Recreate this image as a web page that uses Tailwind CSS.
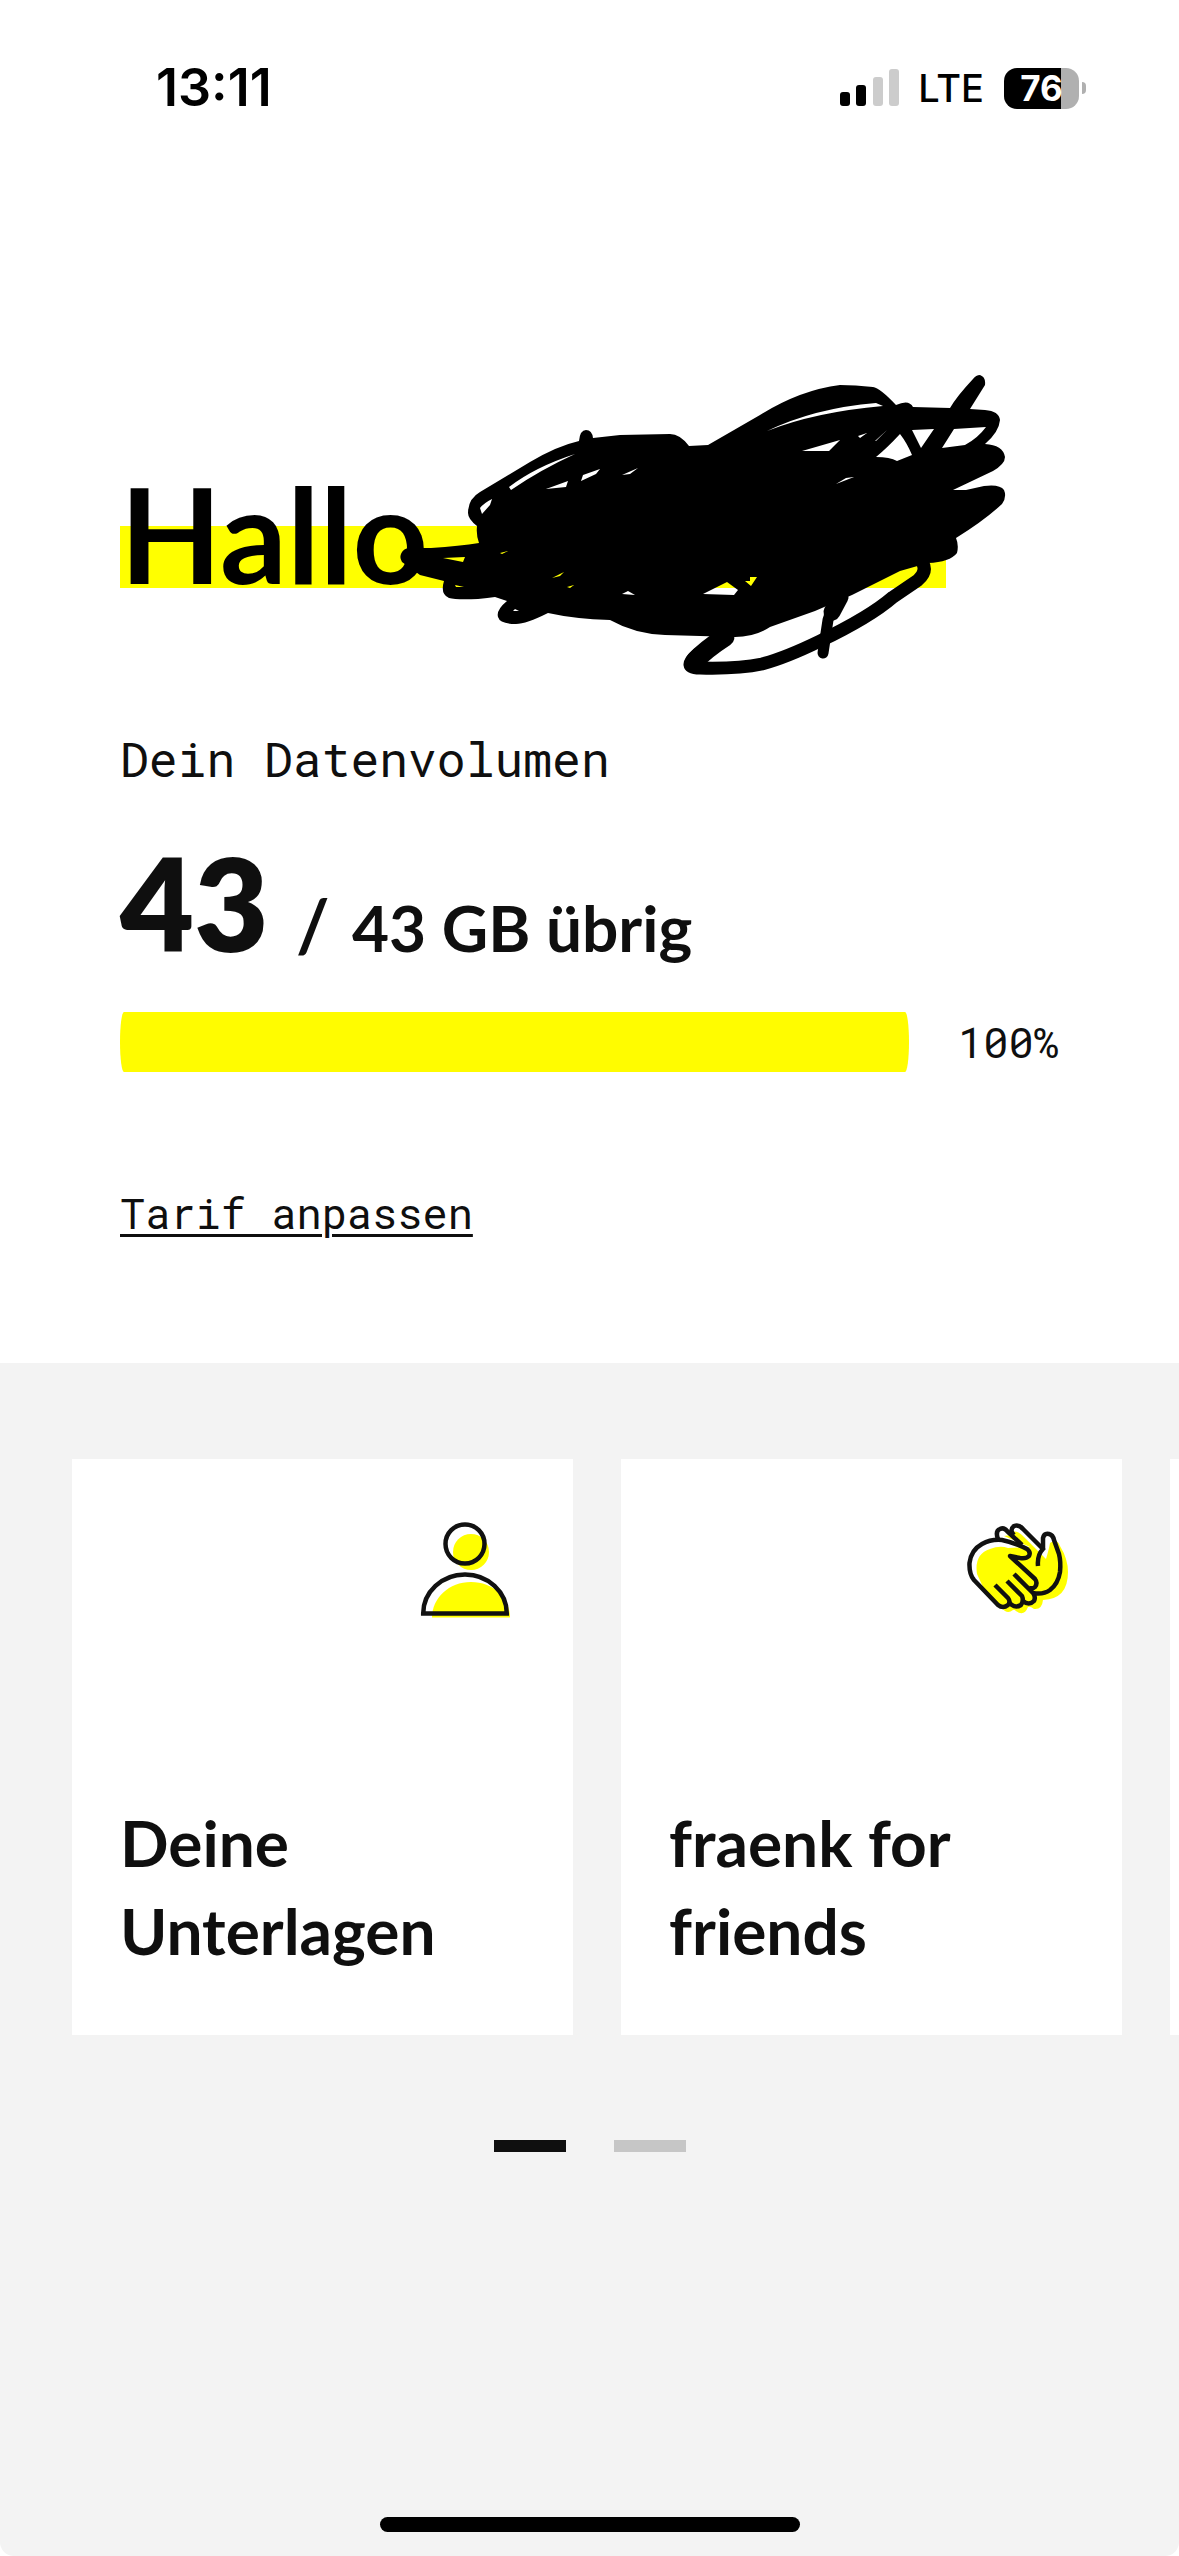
<!DOCTYPE html>
<html lang="de">
<head>
<meta charset="utf-8">
<meta name="viewport" content="width=device-width, initial-scale=1">
<title>fraenk</title>
<script src="https://cdn.jsdelivr.net/npm/@tailwindcss/browser@4"></script>
</head>
<body class="flex min-h-screen flex-col bg-white font-['Lato',sans-serif] text-[#0f0f0f]">

<header class="flex items-end justify-between pl-[156px] pr-[93px] pt-[58px] font-['Inter',sans-serif] text-black">
  <time class="text-[52px] leading-[60px] font-semibold">13:11</time>
  <div class="flex h-[60px] items-center">
    <svg class="h-10 w-[60px]" viewBox="0 0 60 40" role="img" aria-label="Signal">
      <rect x="0" y="24" width="10" height="14" rx="3"/>
      <rect x="16" y="17" width="10" height="21" rx="3"/>
      <rect x="33" y="9" width="10" height="29" rx="3" fill="#ccc"/>
      <rect x="49" y="1" width="10" height="37" rx="3" fill="#ccc"/>
    </svg>
    <span class="ml-[18px] text-[38px] leading-[60px] font-medium">LTE</span>
    <div class="ml-5 flex items-center gap-[3px]">
      <div class="flex h-[41px] w-[75px] items-center justify-center rounded-[13px] bg-[linear-gradient(90deg,#000_76%,#b0b0b0_76%)] text-[35px] font-bold text-white">76</div>
      <div class="h-3 w-1 rounded-r-full bg-[#b0b0b0]"></div>
    </div>
  </div>
</header>

<main class="flex flex-1 flex-col">
  <section class="px-[120px] pt-[351px] pb-[122px]">
    <div class="relative">
      <h1 class="w-[88%] bg-[linear-gradient(#ff0,#ff0)] bg-[length:100%_62px] bg-[position:0_57px] bg-no-repeat text-[132px] leading-[128px] font-bold text-black">Hallo</h1>
      <svg class="absolute -top-[99px] left-[270px] h-[312px] w-[630px]" viewBox="390 370 630 312" aria-hidden="true">
        <path fill-rule="evenodd" d="M431 548 L409 548 A9 9 0 0 0 402 562 L420 575 L444 581 Q440 594 449 598 Q456 600 478 599 Q488 598 495 597 L507 601 Q496 610 498 617 Q500 624 516 624 Q526 624 548 613 Q575 619 610 620 Q635 634 665 635 L735 637 Q755 637 770 627 L815 611 L852 595 L900 571 L928 563 Q950 562 957 553 Q959 545 956 538 Q985 520 1002 504 Q1007 497 1004 490 Q1000 484 984 486 L966 490 L953 490 L993 471 Q1005 464 1005 457 Q1003 445 985 444 Q999 432 1000 420 Q999 411 985 410 L970 409 L985 385 Q986 377 980 375 Q976 375 973 379 Q957 396 950 408 L913 407 Q909 399 896 405 Q880 388 873 387 Q855 385 840 385 Q800 390 760 415 L708 445 L689 446 Q680 434 670 434 L620 435 L593 438 Q592 430 586 430 Q580 430 579 441 Q557 446 530 462 L480 492 Q468 499 468 513 Q468 519 477 526 Q476 535 479 543 Q460 546 431 548 Z
          M480 508 Q484 503 492 499 L490 505 L482 514 Z
          M509 487 Q535 467 575 454 Q540 470 511 490 Z
          M546 489 L568 481 L566 487 Z
          M583 475 L600 469 L596 474 L581 481 Z
          M622 475 L638 468 L630 474 Z
          M767 431 Q815 408 876 403 L883 406 Q815 412 767 431 Z
          M802 451 L840 440 L829 451 Z
          M876 457 Q887 448 900 434 Q907 443 912 455 L897 461 Q890 457 876 457 Z
          M912 430 L934 429 L921 448 Z
          M942 448 L954 429 L986 427 Q978 438 965 445 Z
          M875 441 L887 430 L884 433 L876 441 Z
          M858 436 L867 433 L860 438 Z
          M836 484 L846 478 L854 477 Z
          M443 558 L465 557 L463 562 Z
          M455 585 L464 587 L456 587 Z
          M552 578 L564 572 L560 576 Z
          M500 553 L508 551 L502 554 Z
          M567 587 L574 585 L570 588 Z
          M513 611 L515 609 L519 611 Z
          M622 594 L628 591 L635 595 Z
          M703 594 L727 582 L738 590 L734 595 Z
          M745 581 L750 581 L750 577 L757 577 L751 586 Z"/>
        <g fill="none" stroke="#000" stroke-linecap="round" stroke-linejoin="round">
          <path stroke-width="13" d="M698 654 Q681 668 700 668 Q738 669 762 664 Q785 658 820 641 Q870 617 893 597 L918 580 Q928 571 922 562"/>
          <path stroke-width="19" d="M725 637 Q705 650 695 661"/>
          <path stroke-width="17" d="M840 597 L832 612"/>
          <path stroke-width="11" d="M834 602 L828 620 L823 653"/>
        </g>
      </svg>
    </div>
    <h2 class="mt-[130px] font-['Roboto_Mono','Liberation_Mono',monospace] text-[48px] leading-[64px] font-normal">Dein Datenvolumen</h2>
    <p class="mt-12 flex items-baseline text-[64px] leading-[64px] font-bold">
      <span class="w-[176px] text-[128px] leading-[128px] font-extrabold">43</span>
      <span class="w-14 text-[72px]">/</span>
      <span>43 GB übrig</span>
    </p>
    <div class="mt-[45px] flex items-center gap-[49px]">
      <div role="progressbar" aria-valuenow="100" aria-valuemin="0" aria-valuemax="100" aria-label="Datenvolumen" class="h-[60px] flex-1">
        <div class="h-full rounded-[4px/30px] bg-[#fffc00]" style="width:100%"></div>
      </div>
      <span class="w-[101px] font-['Roboto_Mono','Liberation_Mono',monospace] text-[42px] leading-[56px]">100%</span>
    </div>
    <a href="#tarif" class="mt-[113px] block w-fit font-['Roboto_Mono','Liberation_Mono',monospace] text-[42px] leading-[56px] underline decoration-[3px] underline-offset-[5px]">Tarif anpassen</a>
  </section>

  <section class="flex flex-1 flex-col rounded-b-[14px] bg-[#f3f3f3] pt-24 pb-6">
    <div class="flex gap-12 overflow-hidden pl-[72px]">
      <a href="#unterlagen" class="flex h-[576px] w-[42.5vw] shrink-0 flex-col justify-between bg-white px-12 pt-12 pb-[60px]">
        <svg class="h-[120px] w-[108px] self-end" viewBox="0 0 108 120" aria-hidden="true">
          <g fill="#ff0">
            <circle cx="54" cy="45" r="18"/>
            <path d="M15 110.500 C15 91 32 75 54 75 C76 75 93 91 93 110.500 Z"/>
          </g>
          <g fill="none" stroke="#111" stroke-width="4.500">
            <circle cx="48" cy="37" r="19.500"/>
            <path d="M6.200 106.500 C6.200 85 25 67.500 48 67.500 C71 67.500 89.800 85 89.800 106.500 Z"/>
          </g>
        </svg>
        <h3 class="text-[64px] leading-[88px] font-bold">Deine<br>Unterlagen</h3>
      </a>
      <a href="#friends" class="flex h-[576px] w-[42.5vw] shrink-0 flex-col justify-between bg-white px-12 pt-12 pb-[60px]">
        <svg class="h-[120px] w-[108px] self-end" viewBox="0 0 108 120" aria-hidden="true">
          <path fill="#ff0" d="M11 67 Q8 47 24 42 Q34 38 42 41 L64 40 L38 29 Q46 27 50 34 L46 25 Q52 23 58 30 L80 52 Q83 42 84 36 Q91 31 94 39 Q102 52 102 65 Q102 92 77 93 Q76 103 68 102 Q64 99 62 100 Q58 110 50 104 Q48 102 47 103 Q41 108 36 101 Q26 90 17 80 Z"/>
          <g fill="none" stroke="#111" stroke-width="4.500" stroke-linejoin="round">
            <path d="M29 78 L42 91 Q45 95 42 98 Q37 102 32 98 L8 73 Q3 67 3.500 56 Q5 43 16 37 Q25 32 36 33 Q46 35 57 40 L61 42 Q65 45 63 49 Q60 52 54 51 L44 49 L69 72 Q72 76 69 80 Q67 82 63 81"/>
            <path d="M41 74 L56 89 Q58 94 55 98 Q50 101 46 98 L42 95"/>
            <path d="M48 67 L67 86 Q70 90 68 94 Q63 99 57 94"/>
            <path d="M32 32 Q29 24 34 22 Q38 20 41 24 L56 38"/>
            <path d="M48 28 Q43 23 48 19 Q53 17 57 22 L77 42 Q71 48 72 59"/>
            <path d="M77 43 L77 31 Q78 26 83 27 Q87 28 88 33 L93 47 Q95 55 94 65 Q92 77 84 83 Q77 88 67 86"/>
          </g>
        </svg>
        <h3 class="text-[64px] leading-[88px] font-bold">fraenk for<br>friends</h3>
      </a>
      <div class="h-[576px] w-[42.5vw] shrink-0 bg-white"></div>
    </div>
    <div class="mt-[105px] flex justify-center gap-12">
      <button aria-label="Seite 1" class="h-3 w-[72px] bg-[#0f0f0f]"></button>
      <button aria-label="Seite 2" class="h-3 w-[72px] bg-[#c6c6c6]"></button>
    </div>
    <div class="mx-auto mt-auto h-[15px] w-[420px] max-w-full rounded-full bg-black"></div>
  </section>
</main>
</body>
</html>
